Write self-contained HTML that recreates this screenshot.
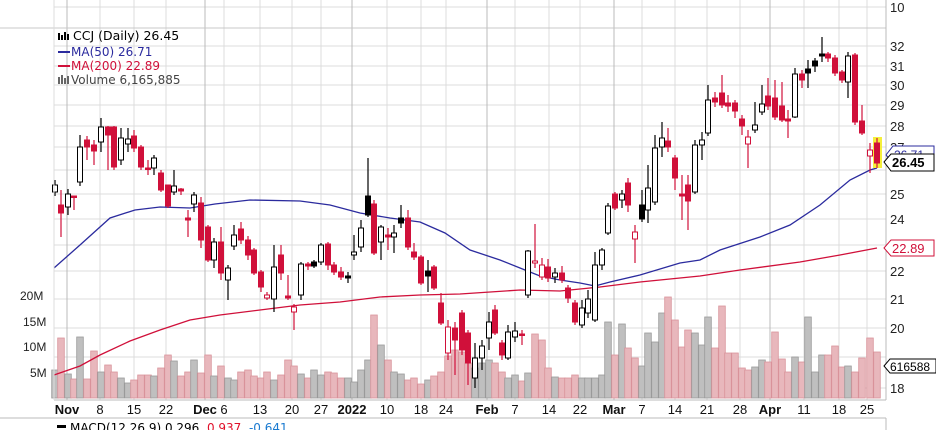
<!DOCTYPE html>
<html><head><meta charset="utf-8"><style>
html,body{margin:0;padding:0;background:#fff;width:936px;height:430px;overflow:hidden}
svg{display:block;font-family:"Liberation Sans",Arial,sans-serif}
</style></head><body>
<svg id="s" width="936" height="430" viewBox="0 0 936 430" xmlns="http://www.w3.org/2000/svg">
<rect width="936" height="430" fill="#fff"/>
<g id="grid" stroke="#dcdcdc" stroke-width="1"></g>
<g id="vol"></g>
<polyline fill="none" stroke="#d0103a" stroke-width="1.3" points="54,375 80,366 100,355 130,341 160,330 190,320 220,315 260,310 300,305 340,302 380,297 420,295 460,294 520,290 560,291 600,287 640,282 700,276 740,270 800,262 840,255 877,248"/>
<polyline fill="none" stroke="#2b2b9e" stroke-width="1.3" points="54,268 80,245 110,218 135,210 160,207 190,208 215,204 250,200 300,201 330,205 360,213 390,218 420,222 445,233 470,250 500,260 520,268 540,276 560,280 580,283 595,286 610,282 640,275 680,263 700,260 720,250 760,237 790,225 820,205 850,180 870,170 877,168"/>
<rect x="873" y="137" width="9" height="31" fill="#f5ef3a"/>
<g id="cand"></g>
<line x1="0" y1="28" x2="886" y2="28" stroke="#c8c8c8"/>
<line x1="886" y1="0" x2="886" y2="400" stroke="#bbb"/>
<line x1="54" y1="400" x2="886" y2="400" stroke="#bbb"/>
<line x1="54" y1="0" x2="54" y2="400" stroke="#ddd"/>
<line x1="0" y1="418" x2="886" y2="418" stroke="#bbb"/>
<line x1="886" y1="418" x2="886" y2="430" stroke="#bbb"/>
<g font-size="13" fill="#222" id="ax"></g>
<g font-size="12" fill="#222">
<text x="20" y="300">20M</text><text x="23" y="326">15M</text><text x="23" y="351">10M</text><text x="30" y="377">5M</text>
</g>
<g font-size="12" fill="#000" font-family="'DejaVu Sans',sans-serif">
<text x="73" y="40" font-size="12.5">CCJ (Daily) 26.45</text>
<g fill="#000"><rect x="58" y="33" width="2" height="7"/><rect x="61" y="35" width="2" height="5"/><rect x="64" y="32" width="2" height="8"/><rect x="67" y="34" width="2" height="6"/></g>
<rect x="58" y="51" width="12" height="2" fill="#2b2b9e"/><text x="71" y="56" fill="#2b2b9e">MA(50) 26.71</text>
<rect x="58" y="65" width="12" height="2" fill="#d0103a"/><text x="71" y="70" fill="#d0103a">MA(200) 22.89</text>
<g fill="#666"><rect x="58" y="77" width="2" height="7"/><rect x="61" y="75" width="2" height="9"/><rect x="64" y="78" width="2" height="6"/><rect x="67" y="76" width="2" height="8"/></g>
<text x="71" y="84" fill="#444">Volume 6,165,885</text>
</g>
<path d="M886,155 L893,146 L934,146 L934,163 L893,163 Z" fill="#fff" stroke="#2b2b9e"/>
<text x="894" y="159" font-size="12" fill="#2b2b9e">26.71</text>
<path d="M884,162 L891,154 L934,154 L934,171 L891,171 Z" fill="#fff" stroke="#000"/>
<text x="892" y="167" font-size="13" font-weight="bold" fill="#000">26.45</text>
<path d="M884,248 L891,240 L934,240 L934,256 L891,256 Z" fill="#fff" stroke="#d0103a"/>
<text x="892" y="253" font-size="13" fill="#d0103a">22.89</text>
<path d="M884,366 L890,359 L936,359 L936,373 L890,373 Z" fill="#fff" stroke="#000"/>
<text x="890" y="371" font-size="12" fill="#000">616588</text>
<g font-size="13" fill="#111" id="dates"></g>
<g font-size="12" font-family="'DejaVu Sans',sans-serif">
<rect x="57" y="425" width="9" height="3" fill="#000"/>
<text x="70" y="432" fill="#000">MACD(12,26,9) 0.296, <tspan fill="#e0102a">0.937</tspan>, <tspan fill="#1a7ad0">-0.641</tspan></text>
</g>
</svg>
<script>
var NS="http://www.w3.org/2000/svg";
function el(p,t,a,txt){var e=document.createElementNS(NS,t);for(var k in a)e.setAttribute(k,a[k]);if(txt)e.textContent=txt;document.getElementById(p).appendChild(e);return e;}
[7,46,66,85,105,126,147,170,194,219,245,271,299,328,357,388].forEach(function(y){el("grid","line",{x1:54,y1:y,x2:886,y2:y});});
[["10",7],["32",46],["31",66],["30",85],["29",105],["28",126],["27",147],["25",194],["24",219],["22",271],["21",299],["20",328],["18",388]].forEach(function(a){el("ax","text",{x:890,y:a[1]+5},a[0]);});
var dates=[["Nov",67,1],["8",100],["15",134],["22",166],["Dec",205,1],["6",224],["13",260],["20",292],["27",321],["2022",352,1],["10",387],["18",421],["24",446],["Feb",487,1],["7",515],["14",549],["22",580],["Mar",614,1],["7",642],["14",675],["21",707],["28",740],["Apr",770,1],["11",804],["18",839],["25",867]];
dates.forEach(function(d){var x=d[1];el("grid","line",{x1:x,y1:0,x2:x,y2:400,stroke:d[2]?"#bbb":"#dcdcdc"});var t=el("dates","text",{x:x,y:414,"text-anchor":"middle"},d[0]);if(d[2]){t.setAttribute("font-weight","bold");}});
var C=[[55,185,192,180,196,"w"],[61,205,213,190,237,"r"],[68,194,207,189,215,"w"],[74,196,197,196,210,"r"],[80,147,182,135,186,"w"],[87,140,147,136,160,"r"],[94,145,151,140,165,"r"],[101,127,142,118,152,"w"],[108,127,135,126,170,"r"],[114,127,167,126,170,"r"],[121,138,160,128,165,"w"],[128,139,144,128,152,"w"],[134,136,148,130,152,"r"],[141,147,167,145,170,"r"],[148,168,169,160,175,"r"],[154,158,168,155,175,"w"],[161,173,190,170,192,"r"],[168,185,206,185,208,"r"],[174,186,192,170,195,"w"],[181,189,191,188,195,"r"],[188,218,220,210,237,"r"],[194,195,204,192,212,"w"],[201,203,240,197,248,"r"],[208,227,260,225,262,"r"],[214,242,260,238,268,"w"],[221,242,273,227,280,"r"],[228,268,280,265,300,"w"],[234,235,246,225,250,"w"],[241,229,240,222,244,"r"],[248,240,255,236,260,"r"],[254,250,273,248,275,"r"],[261,272,287,270,292,"r"],[267,295,298,292,300,"h"],[274,267,299,245,312,"w"],[281,255,273,245,280,"r"],[288,296,298,275,300,"r"],[294,307,312,304,330,"h"],[301,264,295,262,300,"w"],[308,264,266,262,270,"r"],[314,262,266,260,268,"b"],[321,245,262,243,265,"w"],[328,244,265,242,270,"r"],[334,265,272,262,275,"r"],[341,272,277,267,280,"r"],[348,276,278,272,283,"b"],[354,252,255,235,260,"w"],[361,228,247,220,252,"w"],[368,196,215,158,217,"b"],[374,204,253,200,255,"r"],[381,227,242,225,260,"w"],[388,235,237,228,250,"r"],[394,233,237,225,253,"w"],[401,218,223,205,228,"b"],[408,218,247,210,250,"r"],[414,252,257,243,260,"r"],[421,257,283,255,285,"r"],[428,271,276,260,292,"b"],[434,267,288,265,290,"r"],[441,303,323,293,325,"r"],[448,327,353,320,360,"h"],[455,328,340,322,375,"r"],[462,313,350,310,355,"r"],[468,333,363,330,385,"r"],[475,358,378,343,388,"w"],[482,346,358,340,370,"w"],[489,322,338,312,350,"w"],[495,310,333,305,335,"r"],[502,343,355,340,360,"r"],[508,332,358,325,360,"w"],[515,331,337,322,342,"w"],[522,334,335,330,345,"r"],[528,251,295,250,298,"w"],[535,261,263,224,268,"h"],[542,265,277,258,280,"h"],[548,267,278,259,282,"r"],[555,273,277,268,283,"w"],[562,273,280,266,283,"r"],[568,288,298,285,303,"r"],[575,303,322,300,325,"r"],[582,308,325,300,328,"w"],[588,299,313,290,318,"w"],[595,265,320,252,322,"w"],[602,250,265,248,270,"w"],[608,206,233,203,235,"w"],[615,194,208,192,210,"r"],[622,194,200,190,208,"w"],[628,183,205,178,212,"r"],[635,232,239,225,263,"h"],[642,205,219,190,222,"b"],[648,188,210,165,223,"w"],[655,148,202,135,205,"w"],[662,138,147,122,157,"w"],[668,141,147,128,152,"r"],[675,158,178,155,190,"r"],[682,194,196,175,220,"r"],[688,185,201,175,230,"r"],[695,145,192,140,194,"w"],[702,140,145,132,160,"w"],[708,100,133,85,136,"w"],[715,98,102,92,107,"r"],[722,93,105,75,108,"r"],[728,103,106,95,112,"r"],[735,103,111,100,118,"r"],[742,119,126,115,135,"r"],[748,137,144,130,168,"h"],[755,125,130,102,133,"w"],[762,104,112,85,115,"w"],[768,96,106,78,110,"r"],[775,98,117,80,120,"r"],[782,106,120,82,122,"r"],[788,119,121,110,138,"r"],[795,74,117,68,118,"w"],[802,74,80,70,88,"r"],[808,69,73,60,88,"b"],[815,61,66,58,72,"b"],[822,54,56,37,62,"b"],[828,54,58,52,62,"r"],[835,58,73,55,76,"r"],[842,72,80,70,83,"r"],[848,56,82,52,98,"w"],[855,55,122,53,125,"r"],[862,121,133,105,135,"r"],[870,150,156,143,173,"h"],[877,143,163,138,168,"r"]];
C.forEach(function(c){var x=c[0],t=c[5];var col=(t=="r"||t=="h")?"#d0103a":"#000";
el("cand","line",{x1:x,y1:c[3],x2:x,y2:c[4],stroke:col,"stroke-width":1.2});
var h=Math.max(c[2]-c[1],1.5);var fill=(t=="r")?"#d0103a":(t=="b"?"#000":"#fff");
el("cand","rect",{x:x-2.5,y:c[1],width:5,height:h,fill:fill,stroke:col,"stroke-width":1});});
var V=[370,338,374,379,337,379,351,372,365,372,378,383,380,375,375,376,368,355,361,376,372,360,373,355,376,366,378,380,372,370,376,378,372,380,375,360,366,374,378,370,375,372,373,378,378,382,370,360,315,345,360,372,374,380,378,384,380,376,372,356,350,352,363,368,363,360,363,372,378,375,381,373,334,340,368,377,378,378,375,378,378,378,375,322,355,324,348,358,366,333,342,313,297,320,347,330,333,345,317,348,306,353,353,368,370,367,360,362,332,359,372,357,362,317,372,355,355,346,367,366,372,358,338,352,347,368];
C.forEach(function(c,i){var y=V[i]||375;var red=(c[5]=="r"||c[5]=="h");
el("vol","rect",{x:c[0]-3.3,y:y,width:6.6,height:398-y,fill:red?"#e8b7bc":"#bfbfbf",stroke:red?"#d9939b":"#9a9a9a","stroke-width":0.8});});
</script>
</body></html>
